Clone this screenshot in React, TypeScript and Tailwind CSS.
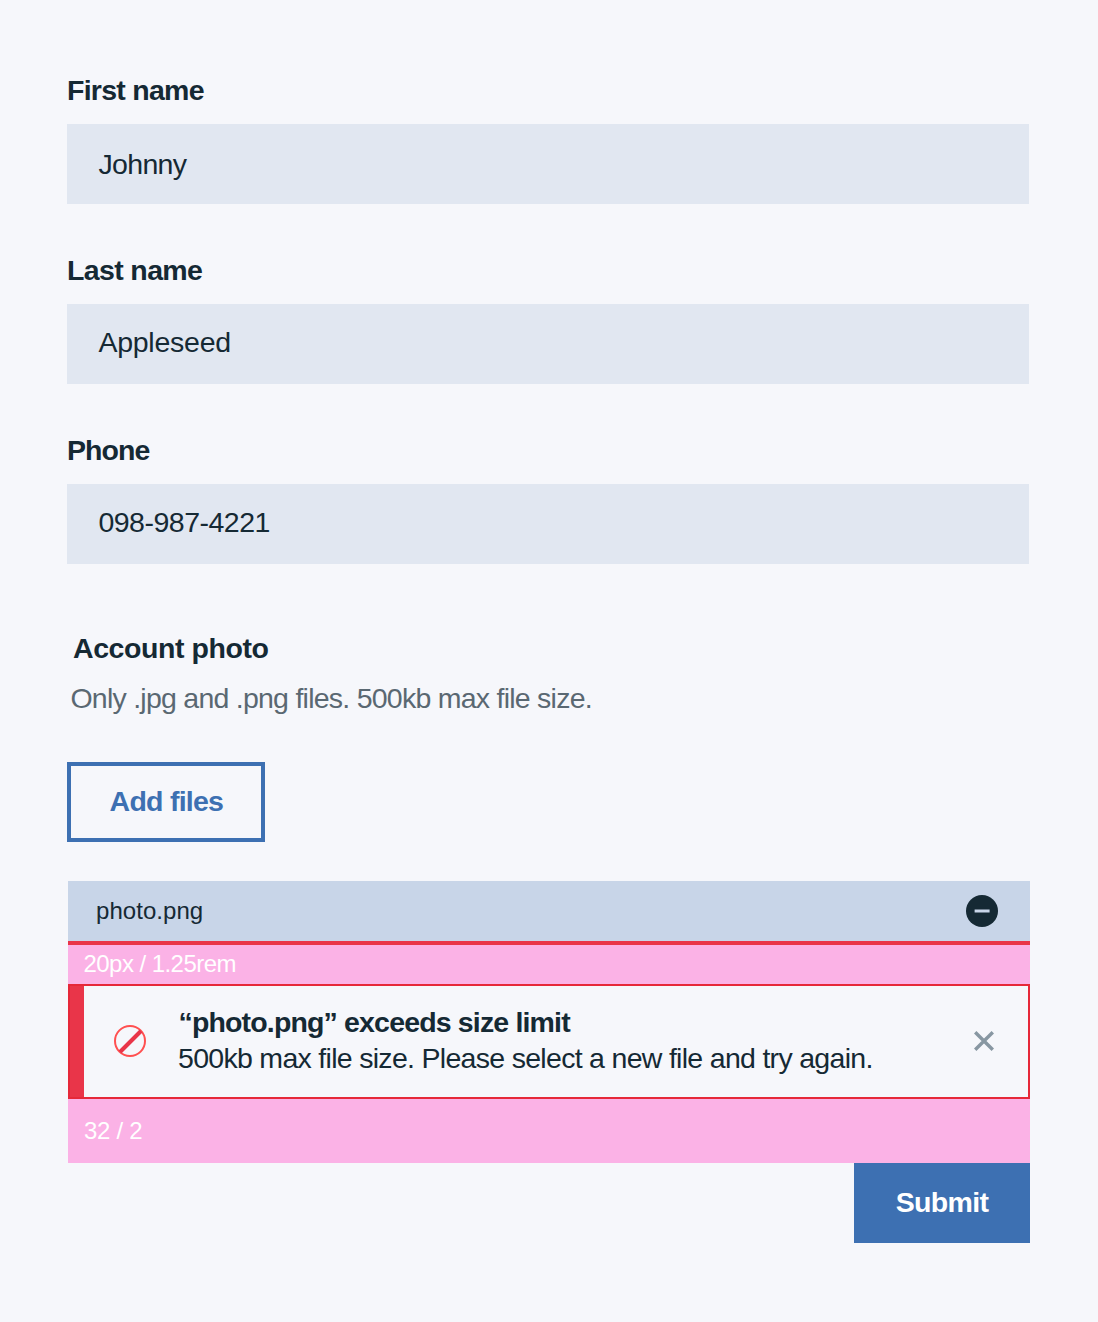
type FieldProps = {
  label: string;
  labelClass: string;
  value: string;
  valueClass: string;
};

function Field({ label, labelClass, value, valueClass }: FieldProps) {
  return (
    <div className="mb-[46px]">
      <div className={`mb-[14px] h-[40px] whitespace-nowrap font-bold ${labelClass}`}>{label}</div>
      <div className="h-[80px] bg-[#e1e7f1] pl-[31px]">
        <div className={`whitespace-nowrap ${valueClass}`}>{value}</div>
      </div>
    </div>
  );
}

export default function App() {
  return (
    <main className="h-[1322px] w-[1098px] bg-[#f6f7fb] pl-[67.4px] pt-[70px] font-['Liberation_Sans',Arial,sans-serif] text-[28.5px] leading-[40px] text-[#152934]">
      <form className="w-[962px]">
        <div>
          <Field label="First name" labelClass="-ml-[0.4px] tracking-[-0.73px]" value="Johnny" valueClass="pt-[20px] tracking-[-0.65px]" />
          <Field label="Last name" labelClass="-ml-[0.4px] tracking-[-0.63px]" value="Appleseed" valueClass="pt-[18px] tracking-[-0.25px]" />
          <Field label="Phone" labelClass="-ml-[0.4px] tracking-[-0.95px]" value="098-987-4221" valueClass="pt-[18px] tracking-[-0.5px]" />
        </div>

        <section className="mt-[64px]">
          <h2 className="ml-[5.6px] h-[40px] font-bold tracking-[-0.42px]">Account photo</h2>
          <p className="ml-[3px] mt-[10px] h-[40px] whitespace-nowrap tracking-[-0.75px] text-[#5a6872]">
            Only .jpg and .png files. 500kb max file size.
          </p>
          <button
            type="button"
            className="mt-[44px] flex h-[80px] w-[198px] items-start justify-center border-4 border-[#3d70b2] pt-[15px] font-bold tracking-[-0.75px] text-[#3d70b2]"
          >
            Add files
          </button>
        </section>

        <section className="ml-[0.6px] mt-[39px] w-[962px]">
          <div className="flex h-[60px] items-center justify-between bg-[#c8d5e8] pl-[28px] pr-[32px] text-[24px] leading-[30px]">
            <span className="tracking-[0.05px]">photo.png</span>
            <svg width="32" height="32" viewBox="0 0 32 32" aria-hidden="true">
              <circle cx="16" cy="16" r="16" fill="#152934" />
              <path d="M8.6 16H23.6" stroke="#c8d5e8" strokeWidth="3" />
            </svg>
          </div>
          <div className="h-[42.5px] border-t-4 border-[#e93549] bg-[#fbb2e6] pl-[15.5px] text-[24px] leading-[38px] tracking-[-0.55px] text-white">
            20px / 1.25rem
          </div>
          <div className="flex h-[115.5px] border-2 border-[#e62839] bg-[#f6f7fb]">
            <div className="w-[14px] bg-[#e93549]" />
            <svg className="ml-[30px] mt-[39.5px] shrink-0" width="32" height="32" viewBox="0 0 32 32" fill="none" aria-hidden="true">
              <circle cx="16" cy="16" r="15" stroke="#ff5050" strokeWidth="2" />
              <path d="M6 27L27 6" stroke="#e93549" strokeWidth="4" />
            </svg>
            <div className="ml-[32px] mt-[18.5px] w-[796px] whitespace-nowrap leading-[36px]">
              <div className="ml-[0.5px] font-bold tracking-[-0.84px]">“photo.png” exceeds size limit</div>
              <div className="tracking-[-0.7px]">500kb max file size. Please select a new file and try again.</div>
            </div>
            <svg className="mt-[45.5px] shrink-0" width="20" height="20" viewBox="0 0 20 20" aria-hidden="true">
              <path d="M1.2 1.2L18.8 18.8M18.8 1.2L1.2 18.8" stroke="#8897a2" strokeWidth="3.4" />
            </svg>
          </div>
          <div className="h-[64px] bg-[#fbb2e6] pl-[16px] text-[24px] leading-[63px] tracking-[-0.3px] text-white">32 / 2</div>
          <div className="flex justify-end">
            <button
              type="submit"
              className="flex h-[80px] w-[176px] items-start justify-center bg-[#3d70b2] pt-[19px] font-bold tracking-[-0.65px] text-white"
            >
              Submit
            </button>
          </div>
        </section>
      </form>
    </main>
  );
}
